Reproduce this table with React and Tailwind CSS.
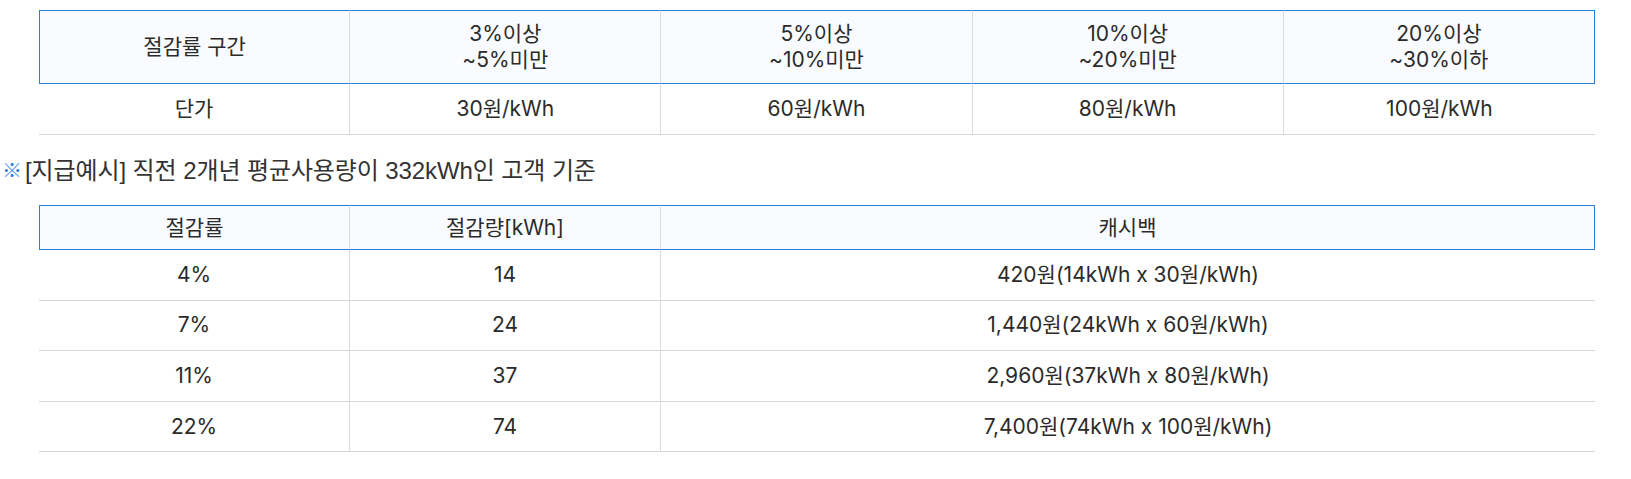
import React from 'react';

const rates = [
    { range: ['3%이상', '~5%미만'], price: '30원/kWh' },
    { range: ['5%이상', '~10%미만'], price: '60원/kWh' },
    { range: ['10%이상', '~20%미만'], price: '80원/kWh' },
    { range: ['20%이상', '~30%이하'], price: '100원/kWh' },
];

const examples = [
    { rate: '4%', amount: '14', cashback: '420원(14kWh x 30원/kWh)' },
    { rate: '7%', amount: '24', cashback: '1,440원(24kWh x 60원/kWh)' },
    { rate: '11%', amount: '37', cashback: '2,960원(37kWh x 80원/kWh)' },
    { rate: '22%', amount: '74', cashback: '7,400원(74kWh x 100원/kWh)' },
];

const font = "font-['Inter','Noto_Sans_CJK_KR',sans-serif]";

const App = () => {
    return (
        <div className={`bg-white w-[1631px] h-[479px] pt-[10px] pl-[7px] text-[#2b2b2b] ${font}`}>
            <div className="ml-[32px] w-[1556px]">
                <table className="w-full table-fixed border-separate border-spacing-0 text-[21px] leading-[26px] text-center">
                    <thead>
                        <tr className="bg-[#f9fbfe]">
                            <th className="font-normal py-[10px] border-y border-l border-r border-y-[#2a7ee0] border-l-[#2a7ee0] border-r-[#d7dadf]">절감률 구간</th>
                            {rates.map((r, i) => (
                                <th
                                    key={i}
                                    className={`font-normal py-[10px] border-y border-y-[#2a7ee0] border-r ${i === rates.length - 1 ? 'border-r-[#2a7ee0]' : 'border-r-[#d7dadf]'}`}
                                >
                                    {r.range[0]}
                                    <br />
                                    {r.range[1]}
                                </th>
                            ))}
                        </tr>
                    </thead>
                    <tbody>
                        <tr>
                            <td className="py-[12px] border-b border-r border-b-[#d6d6d6] border-r-[#d7dadf]">단가</td>
                            {rates.map((r, i) => (
                                <td
                                    key={i}
                                    className={`py-[12px] border-b border-b-[#d6d6d6] ${i === rates.length - 1 ? '' : 'border-r border-r-[#d7dadf]'}`}
                                >
                                    {r.price}
                                </td>
                            ))}
                        </tr>
                    </tbody>
                </table>
            </div>

            <p className="-ml-[5px] mt-[21px] mb-[19px] h-[30px] leading-[30px] flex items-center font-['Liberation_Sans','Noto_Sans_CJK_KR',sans-serif] text-[24px] tracking-[-0.1px] text-[#333]">
                <span className="text-[#2b7de9] text-[20px] font-bold tracking-normal mr-[3px]">※</span>
                [지급예시] 직전 2개년 평균사용량이 332kWh인 고객 기준
            </p>

            <div className="ml-[32px] w-[1556px]">
                <table className="w-full table-fixed border-separate border-spacing-0 text-[21px] leading-[26px] text-center">
                    <colgroup>
                        <col className="w-[311px]" />
                        <col className="w-[311px]" />
                        <col />
                    </colgroup>
                    <thead>
                        <tr className="bg-[#f9fbfe]">
                            <th className="font-normal pt-[9px] pb-[8px] border-y border-l border-r border-y-[#2a7ee0] border-l-[#2a7ee0] border-r-[#d7dadf]">절감률</th>
                            <th className="font-normal pt-[9px] pb-[8px] border-y border-r border-y-[#2a7ee0] border-r-[#d7dadf]">절감량[kWh]</th>
                            <th className="font-normal pt-[9px] pb-[8px] border-y border-r border-[#2a7ee0]">캐시백</th>
                        </tr>
                    </thead>
                    <tbody>
                        {examples.map((e, i) => (
                            <tr key={i}>
                                <td className="py-[11.8px] border-b border-r border-b-[#d6d6d6] border-r-[#d7dadf]">{e.rate}</td>
                                <td className="py-[11.8px] border-b border-r border-b-[#d6d6d6] border-r-[#d7dadf]">{e.amount}</td>
                                <td className="py-[11.8px] border-b border-b-[#d6d6d6]">{e.cashback}</td>
                            </tr>
                        ))}
                    </tbody>
                </table>
            </div>
        </div>
    );
};

export default App;
